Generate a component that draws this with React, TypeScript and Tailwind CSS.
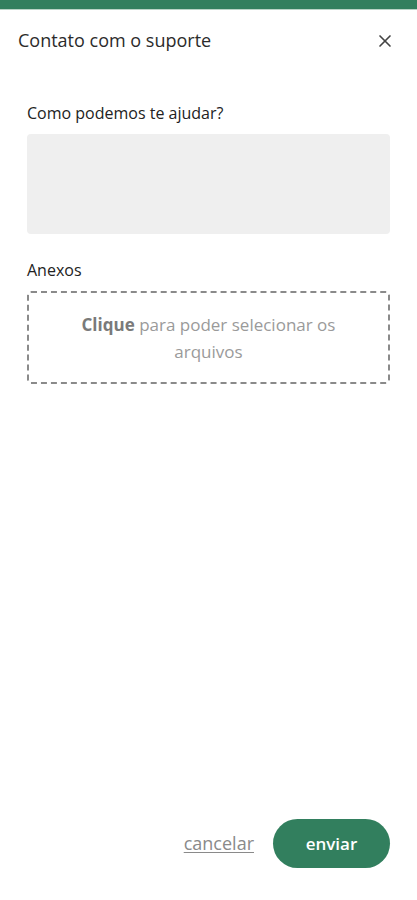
import { X } from 'lucide-react'

export default function App() {
  return (
    <div
      className="flex h-[900px] w-full flex-col bg-white"
      style={{ fontFamily: '"Open Sans", Lato, sans-serif' }}
    >
      {/* barra superior */}
      <div className="h-[9px] w-full bg-[#327f5e]" />
      <div className="h-[1px] w-full bg-[#b9d3c6]" />

      {/* cabeçalho */}
      <div className="flex items-center justify-between pl-[18px] pr-[22px] pt-[17px]">
        <h1 className="text-[18px] text-[#2b2b2b]">Contato com o suporte</h1>
        <X size={20} strokeWidth={2} className="text-[#444]" />
      </div>

      {/* formulário */}
      <div className="flex flex-col px-[27px] pt-[47px]">
        <label className="text-[16px] text-[#222]">Como podemos te ajudar?</label>
        <textarea className="mt-[9px] h-[100px] w-full resize-none rounded-[4px] bg-[#efefef] outline-none" />

        <label className="mt-[24px] text-[16px] text-[#222]">Anexos</label>
        <div className="mt-[9px] flex h-[93px] items-center justify-center rounded-[4px] border-2 border-dashed border-[#8a8a8a] px-8 text-center text-[17px] leading-[27px] text-[#9a9a9a]">
          <p>
            <span className="font-bold text-[#7a7a7a]">Clique</span> para poder selecionar os arquivos
          </p>
        </div>
      </div>

      {/* rodapé */}
      <div className="mt-auto flex items-center justify-end gap-[19px] pb-[32px] pr-[27px]">
        <button className="text-[18px] text-[#8a8a8a] underline underline-offset-2">cancelar</button>
        <button className="h-[49px] w-[117px] rounded-full bg-[#327f5e] text-[17px] font-semibold text-white">
          enviar
        </button>
      </div>
    </div>
  )
}
